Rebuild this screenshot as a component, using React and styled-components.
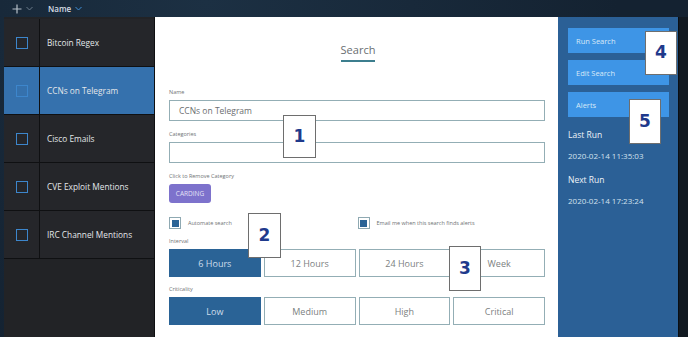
import styled, { createGlobalStyle } from "styled-components";

const GlobalStyle = createGlobalStyle`
  html, body {
    margin: 0;
    padding: 0;
    background: #15222f;
    font-family: "Open Sans", "Liberation Sans", sans-serif;
  }
  * {
    box-sizing: border-box;
  }
`;

const searches = [
  "Bitcoin Regex",
  "CCNs on Telegram",
  "Cisco Emails",
  "CVE Exploit Mentions",
  "IRC Channel Mentions",
];

const intervals = ["6 Hours", "12 Hours", "24 Hours", "Week"];
const criticality = ["Low", "Medium", "High", "Critical"];

const callouts = [
  { n: 1, x: 283, y: 115, w: 33, h: 43 },
  { n: 2, x: 248, y: 213, w: 33, h: 45 },
  { n: 3, x: 449, y: 246, w: 32, h: 45 },
  { n: 4, x: 645, y: 31, w: 32, h: 44 },
  { n: 5, x: 629, y: 99, w: 32, h: 45 },
];

const Chevron = ({ color }) => (
  <svg width="7" height="5" viewBox="0 0 7 5">
    <path d="M0.5 1 L3.5 4 L6.5 1" fill="none" stroke={color} strokeWidth="1" />
  </svg>
);

const PlusIcon = () => (
  <svg width="10" height="10" viewBox="0 0 10 10">
    <path d="M5 0.5 V9.5 M0.5 5 H9.5" stroke="#b6c0c9" strokeWidth="1.2" />
  </svg>
);

export default function App() {
  return (
    <Page>
      <GlobalStyle />
      <TopBar>
        <PlusIcon />
        <Chevron color="#6b7b8a" />
        <SortLabel>Name</SortLabel>
        <Chevron color="#3f8fd8" />
      </TopBar>
      <Body>
        <List>
          {searches.map((name, i) => (
            <Row key={name} selected={i === 1}>
              <CheckCell>
                <RowCheck />
              </CheckCell>
              <RowName>{name}</RowName>
            </Row>
          ))}
        </List>
        <Form>
          <Title>Search</Title>
          <Label>Name</Label>
          <Input>CCNs on Telegram</Input>
          <Label>Categories</Label>
          <Input />
          <Label>Click to Remove Category</Label>
          <Chip>CARDING</Chip>
          <Checks>
            <CheckItem>
              <FormCheck />
              <CheckText>Automate search</CheckText>
            </CheckItem>
            <CheckItem>
              <FormCheck />
              <CheckText>Email me when this search finds alerts</CheckText>
            </CheckItem>
          </Checks>
          <Label>Interval</Label>
          <Choices>
            {intervals.map((v, i) => (
              <Choice key={v} active={i === 0}>{v}</Choice>
            ))}
          </Choices>
          <Label>Criticality</Label>
          <Choices>
            {criticality.map((v, i) => (
              <Choice key={v} active={i === 0}>{v}</Choice>
            ))}
          </Choices>
        </Form>
        <Side>
          <SideButton>Run Search</SideButton>
          <SideButton>Edit Search</SideButton>
          <SideButton>Alerts</SideButton>
          <RunLabel>Last Run</RunLabel>
          <RunDate>2020-02-14 11:35:03</RunDate>
          <RunLabel>Next Run</RunLabel>
          <RunDate>2020-02-14 17:23:24</RunDate>
        </Side>
        <Edge />
      </Body>
      {callouts.map((c) => (
        <Callout
          key={c.n}
          style={{ left: c.x, top: c.y, width: c.w, height: c.h }}
        >
          {c.n}
        </Callout>
      ))}
    </Page>
  );
}

const Page = styled.div`
  position: relative;
  width: 688px;
  height: 337px;
  overflow: hidden;
  display: flex;
  flex-direction: column;
  background: radial-gradient(circle at 30% 0%, #1c3043, #142231 70%);
`;

const TopBar = styled.div`
  height: 17px;
  display: flex;
  align-items: center;
  padding-left: 12px;
  gap: 4px;
  color: #c9d1d8;
`;

const SortLabel = styled.span`
  font-size: 8px;
  font-weight: 600;
  margin-left: 11px;
  color: #d6dde3;
`;

const Body = styled.div`
  flex: 1;
  display: flex;
  padding-left: 4px;
  min-height: 0;
`;

const List = styled.div`
  width: 151px;
  background: #222326;
  border-right: 1px solid #0e0f11;
  display: flex;
  flex-direction: column;
  padding-top: 2px;
`;

const Row = styled.div`
  height: 48px;
  display: flex;
  background: ${(p) => (p.selected ? "#3571ad" : "#25262a")};
  border-bottom: 1px solid #0f1012;
`;

const CheckCell = styled.div`
  width: 36px;
  display: flex;
  align-items: center;
  justify-content: center;
  border-right: 1px solid #0f1012;
`;

const RowCheck = styled.div`
  width: 12px;
  height: 12px;
  border: 1.5px solid #3d86cc;
`;

const RowName = styled.div`
  display: flex;
  align-items: center;
  padding-left: 7px;
  font-size: 8.3px;
  color: #e3e6e9;
`;

const Form = styled.div`
  width: 403px;
  background: #ffffff;
  padding: 25px 13px 0 14px;
  display: flex;
  flex-direction: column;
`;

const Title = styled.div`
  align-self: center;
  font-size: 11px;
  color: #6a6e72;
  padding-bottom: 3px;
  border-bottom: 2px solid #3c7e8e;
  margin-bottom: 26px;
  margin-left: 2px;
`;

const Label = styled.div`
  font-size: 5.5px;
  color: #6f7275;
  line-height: 9px;
  margin-bottom: 3px;
`;

const Input = styled.div`
  height: 21px;
  border: 1.5px solid #93aeb5;
  font-size: 8.5px;
  color: #6b6e70;
  display: flex;
  align-items: center;
  padding-left: 9px;
  margin-bottom: 9px;
`;

const Chip = styled.div`
  align-self: flex-start;
  width: 42px;
  height: 19px;
  border-radius: 3px;
  background: #7d72cc;
  color: #e4e1f6;
  font-size: 6.5px;
  display: flex;
  align-items: center;
  justify-content: center;
  margin-bottom: 14px;
`;

const Checks = styled.div`
  display: grid;
  grid-template-columns: 1fr 1fr;
  column-gap: 1px;
  margin-bottom: 8px;
`;

const CheckItem = styled.div`
  display: flex;
  align-items: center;
  gap: 7px;
`;

const FormCheck = styled.div`
  width: 12px;
  height: 12px;
  border: 1px solid #8fa9b2;
  display: flex;
  align-items: center;
  justify-content: center;

  &::after {
    content: "";
    width: 7px;
    height: 7px;
    background: #2a6396;
  }
`;

const CheckText = styled.span`
  font-size: 5.5px;
  color: #6f7275;
`;

const Choices = styled.div`
  display: grid;
  grid-template-columns: repeat(4, 1fr);
  gap: 3px;
  margin-bottom: 8px;
`;

const Choice = styled.div`
  height: 28px;
  display: flex;
  align-items: center;
  justify-content: center;
  font-size: 9px;
  color: ${(p) => (p.active ? "#cfdeeb" : "#7c7f82")};
  background: ${(p) => (p.active ? "#2a6396" : "#ffffff")};
  border: 1.5px solid ${(p) => (p.active ? "#2a6396" : "#93aeb5")};
`;

const Side = styled.div`
  width: 120px;
  background: #2b6096;
  padding: 11px 9px 0 10px;
  display: flex;
  flex-direction: column;
`;

const SideButton = styled.div`
  height: 25px;
  background: #3e95e6;
  color: #d8e9f8;
  font-size: 7.5px;
  display: flex;
  align-items: center;
  padding-left: 8px;
  margin-bottom: 7px;
`;

const RunLabel = styled.div`
  font-size: 8.5px;
  color: #eef3f8;
  margin-top: 5px;
  line-height: 12px;
`;

const RunDate = styled.div`
  font-size: 8px;
  color: #d2e0ee;
  margin-top: 9px;
  margin-bottom: 7px;
  line-height: 12px;
`;

const Edge = styled.div`
  flex: 1;
  background: #111921;
  border-left: 1px solid #0a0e12;
`;

const Callout = styled.div`
  position: absolute;
  background: #ffffff;
  border: 1px solid #6e6e6e;
  display: flex;
  align-items: center;
  justify-content: center;
  font-family: "DejaVu Sans", "Liberation Sans", sans-serif;
  font-weight: 700;
  font-size: 17px;
  color: #1f3a8c;
  padding-bottom: 2px;
`;
